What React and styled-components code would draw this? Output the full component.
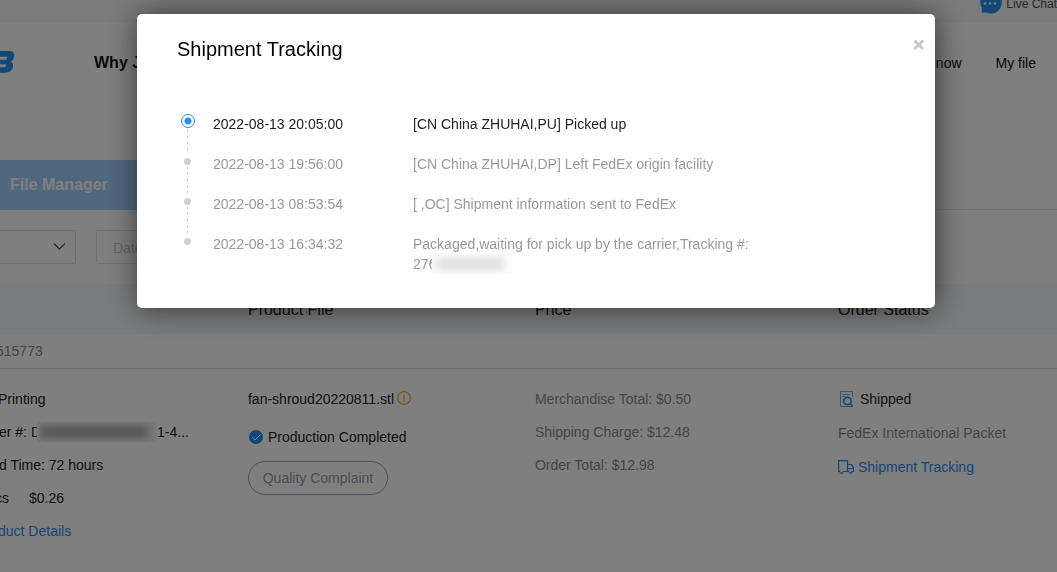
import React from "react";
import styled, { createGlobalStyle } from "styled-components";

const Global = createGlobalStyle`
  * { box-sizing: border-box; }
  html, body { margin: 0; overflow: hidden; }
  body { font: 14px/20px "Liberation Sans", Arial, sans-serif; color: #222; background: #fff; }
  button, input, select { font: inherit; }
  a { color: #2a8cf0; text-decoration: none; }
  h1, h2, p, ul, ol, dl { margin: 0; padding: 0; font-weight: normal; }
`;

const Page = styled.div`
  min-height: 100vh;
  overflow: hidden;
`;

const TopBar = styled.div`
  display: flex;
  justify-content: flex-end;
  height: 23px;
  background: #f7f7f7;
`;

const ChatLink = styled.a`
  display: flex;
  gap: 4px;
  height: 23px;
  color: #555;
  font-size: 12px;
  line-height: 8px;
  white-space: nowrap;
`;

const Header = styled.header`
  display: flex;
  align-items: center;
  height: 80px;
  padding-right: 21px;
`;

const Logo = styled.svg`
  display: block;
  width: 16px;
  height: 24px;
  margin-right: 78px;
`;

const Nav = styled.nav`
  display: flex;
  flex: 1;
  gap: 34px;
`;

const NavLink = styled.a`
  color: #111;
  font-size: ${(p) => (p.$strong ? 16 : 14)}px;
  font-weight: ${(p) => (p.$strong ? "bold" : "normal")};
  margin-right: ${(p) => (p.$push ? "auto" : "0")};
  white-space: nowrap;
`;

const TabBar = styled.div`
  display: flex;
  margin-top: 57px;
  margin-bottom: -1px;
  border-bottom: 1px solid #e6e6e6;
`;

const Tab = styled.button`
  width: 190px;
  height: 50px;
  padding: 0 0 0 10px;
  margin-bottom: -1px;
  border: 0;
  background: #a3cffc;
  color: #fff;
  font-size: 16px;
  font-weight: bold;
  text-align: left;
`;

const Filters = styled.form`
  display: flex;
  gap: 20px;
  padding: 21px 0 20px;
`;

const SelectBox = styled.label`
  position: relative;
  width: 76px;
  height: 34px;
`;

const Select = styled.select`
  width: 100%;
  height: 100%;
  appearance: none;
  border: 1px solid #e2e2ee;
  border-left: 0;
  border-radius: 0 2px 2px 0;
  background: #fff;
`;

const Chevron = styled.svg`
  position: absolute;
  top: 12px;
  right: 10px;
  width: 13px;
  height: 9px;
  pointer-events: none;
`;

const DateInput = styled.input`
  width: 220px;
  height: 34px;
  padding: 2px 16px 0;
  border: 1px solid #e2e2ee;
  border-radius: 2px;
  background: #fff;
  &::placeholder { color: #c8c8c8; opacity: 1; }
`;

const Orders = styled.table`
  width: 100%;
  table-layout: fixed;
  border-collapse: collapse;
  text-align: left;
`;

const HeadCell = styled.th`
  height: 50px;
  padding: 2px 0 0;
  background: #f5f7fa;
  font-size: 16px;
  font-weight: normal;
`;

const OrderNumber = styled.td`
  height: 34px;
  padding: 0;
  border-bottom: 1px solid #dcdce8;
  color: #888;
`;

const Cell = styled.td`
  padding: 20px 0;
  vertical-align: top;
  white-space: nowrap;
`;

const Stack = styled.div`
  display: flex;
  flex-direction: column;
  align-items: flex-start;
  gap: ${(p) => p.$gap || 13}px;
  color: ${(p) => (p.$muted ? "#888" : "inherit")};
`;

const Line = styled.div`
  display: flex;
  align-items: center;
  gap: ${(p) => p.$gap || 0}px;
  color: ${(p) => (p.$muted ? "#888" : "inherit")};
`;

const Clipped = styled(Line)`
  margin-left: ${(p) => -p.$cut}px;
`;

const TrackLink = styled.a`
  display: flex;
  align-items: center;
  gap: 4px;
`;

const Icon = styled.svg`
  display: block;
  flex: none;
`;

const Complaint = styled.button`
  width: 140px;
  height: 34px;
  padding: 0;
  border: 1px solid #a0a0b4;
  border-radius: 17px;
  background: transparent;
  color: #9a9aa6;
`;

const Redacted = styled.span`
  position: relative;
  width: ${(p) => p.$width}px;
  height: 20px;
  margin-left: -4px;
  overflow: hidden;
  background: ${(p) => p.$surface};
  &::before {
    content: "";
    display: block;
    height: 10px;
    margin: 5px 8px 5px 4px;
    background: ${(p) => p.$tone};
    filter: blur(5px);
  }
`;

const Backdrop = styled.div`
  position: fixed;
  inset: 0;
  padding: 14px 122px 0 137px;
  background: rgba(0, 0, 0, 0.5);
`;

const Dialog = styled.section`
  position: relative;
  padding: 23px 40px 34px;
  border-radius: 5px;
  background: #fff;
  box-shadow: 1px 1px 30px rgba(0, 0, 0, 0.6);
`;

const Title = styled.h2`
  color: #000;
  font-size: 20px;
  line-height: 24px;
`;

const Close = styled.button`
  position: absolute;
  top: 24px;
  right: 10px;
  width: 13px;
  height: 13px;
  padding: 0;
  border: 0;
  background: none;
`;

const Timeline = styled.ol`
  padding-top: 53px;
  list-style: none;
`;

const Event = styled.li`
  display: flex;
  min-height: ${(p) => (p.$last ? 20 : 40)}px;
  color: ${(p) => (p.$active ? "#222" : "#999")};
`;

const Marker = styled.span`
  display: flex;
  flex: none;
  flex-direction: column;
  align-items: center;
  width: 21px;
  margin-right: 15px;
`;

const Dot = styled.span`
  flex: none;
  width: 7px;
  height: 7px;
  margin-top: 4px;
  border-radius: 50%;
  background: #d0d0d6;
`;

const ActiveDot = styled.span`
  flex: none;
  width: 14px;
  height: 14px;
  border: 1px solid #2a8cf0;
  border-radius: 50%;
  background: radial-gradient(circle, #2a8cf0 3px, transparent 4px);
`;

const Connector = styled.span`
  flex: 1;
  width: 1px;
  margin-top: 2px;
  background: repeating-linear-gradient(#c8c8cc 0 2px, transparent 2px 6px);
`;

const Time = styled.time`
  flex: none;
  width: 200px;
`;

const Detail = styled.div`
  width: 344px;
`;

const events = [
  { time: "2022-08-13 20:05:00", text: "[CN China ZHUHAI,PU] Picked up" },
  { time: "2022-08-13 19:56:00", text: "[CN China ZHUHAI,DP] Left FedEx origin facility" },
  { time: "2022-08-13 08:53:54", text: "[ ,OC] Shipment information sent to FedEx" },
  {
    time: "2022-08-13 16:34:32",
    text: "Packaged,waiting for pick up by the carrier,Tracking #:",
    number: "276",
  },
];

function ChatIcon() {
  return (
    <Icon width="22" height="14" viewBox="0 0 22 14" aria-hidden="true">
      <path d="M.3 0C.1 3 .5 5.500 1.800 7.500V12.500H6.500C8 13.300 9.500 13.600 11 13.600C17 13.600 21.500 9 21.700 3V0Z" fill="#2a8cf0" />
      <g fill="#fff">
        <circle cx="5" cy="3.5" r="1.3" />
        <circle cx="10" cy="3.5" r="1.3" />
        <circle cx="15" cy="3.5" r="1.3" />
      </g>
    </Icon>
  );
}

function OrdersPage() {
  return (
    <Page>
      <TopBar>
        <ChatLink href="#chat">
          <ChatIcon />
          Live Chat
        </ChatLink>
      </TopBar>
      <Header>
        <Logo viewBox="0 0 16 24" aria-label="JLCPCB" role="img">
          <path
            fillRule="evenodd"
            fill="#2a8cf0"
            d="M-6 0H9C12.500 0 14.600 1.500 14.300 4.500C14 8 12.500 10 10.500 10.700C12.500 11.500 13.500 13 13 16C12.300 19.500 9.500 21.700 5.500 21.700H-10ZM-3 5.800L-4 8.800H4.500C6.200 8.800 7 8.300 7.100 7.200C7.200 6.200 6.500 5.800 5.500 5.800ZM-4 13.200L-5 16.200H3.500C5 16.200 5.900 15.800 6 14.700C6.100 13.700 5.500 13.200 4.500 13.200Z"
          />
        </Logo>
        <Nav>
          <NavLink $strong $push href="#why">Why JLCPCB?</NavLink>
          <NavLink href="#order">Order now</NavLink>
          <NavLink href="#files">My file</NavLink>
        </Nav>
      </Header>
      <TabBar>
        <Tab type="button">File Manager</Tab>
      </TabBar>
      <Filters>
        <SelectBox>
          <Select aria-label="Order status" />
          <Chevron viewBox="0 0 13 9" fill="none" stroke="#555" strokeWidth="1.3" aria-hidden="true">
            <path d="M1 1.500L6.500 7L12 1.500" />
          </Chevron>
        </SelectBox>
        <DateInput aria-label="Date" placeholder="Date" />
      </Filters>
      <Orders>
        <colgroup>
          <col style={{ width: "23.46%" }} />
          <col style={{ width: "27.15%" }} />
          <col style={{ width: "28.67%" }} />
          <col />
        </colgroup>
        <thead>
          <tr>
            <HeadCell aria-label="Product" />
            <HeadCell>Product File</HeadCell>
            <HeadCell>Price</HeadCell>
            <HeadCell>Order Status</HeadCell>
          </tr>
        </thead>
        <tbody>
          <tr>
            <OrderNumber colSpan={4}>
              <Clipped $cut={4}>515773</Clipped>
            </OrderNumber>
          </tr>
          <tr>
            <Cell>
              <Stack>
                <Clipped $cut={2}>Printing</Clipped>
                <Clipped $cut={1}>
                  er #: D
                  <Redacted $width={120} $surface="#f6f6f6" $tone="#989898" />
                  1-4...
                </Clipped>
                <Clipped $cut={1}>d Time: 72 hours</Clipped>
                <Clipped $cut={5} $gap={20}>
                  <span>cs</span>
                  <span>$0.26</span>
                </Clipped>
                <Clipped $cut={2}>
                  <a href="#details">duct Details</a>
                </Clipped>
              </Stack>
            </Cell>
            <Cell>
              <Stack $gap={18}>
                <Line $gap={3}>
                  fan-shroud20220811.stl
                  <Icon width="14" height="16" viewBox="0 0 14 16" fill="none" stroke="#f5a623" aria-hidden="true">
                    <circle cx="7" cy="7" r="6.400" strokeWidth="1.200" />
                    <path d="M7 3.500V8.500M7 9.500V10.700" strokeWidth="1.200" />
                  </Icon>
                </Line>
                <Stack $gap={14}>
                  <Line $gap={4}>
                    <Icon width="16" height="14" viewBox="0 0 16 14" fill="none" aria-hidden="true">
                      <circle cx="8" cy="7" r="7" fill="#2a8cf0" />
                      <path d="M4 7L7 10L12.500 4.500" stroke="#fff" />
                    </Icon>
                    Production Completed
                  </Line>
                  <Complaint type="button">Quality Complaint</Complaint>
                </Stack>
              </Stack>
            </Cell>
            <Cell>
              <Stack $muted>
                <p>Merchandise Total: $0.50</p>
                <p>Shipping Charge: $12.48</p>
                <p>Order Total: $12.98</p>
              </Stack>
            </Cell>
            <Cell>
              <Stack $gap={14}>
                <Line $gap={6}>
                  <Icon width="16" height="16" viewBox="0 0 16 16" fill="none" stroke="#3d9be8" aria-hidden="true">
                    <path d="M14.500 6V.500H2.500V15.500H14.500M4.500 3.500H11.500M4.500 5.500H7.500" opacity=".8" />
                    <circle cx="9.500" cy="10" r="3.700" strokeWidth="1.800" />
                    <path d="M12 12.500L14.800 15.300" strokeWidth="1.800" />
                  </Icon>
                  Shipped
                </Line>
                <Line $muted>FedEx International Packet</Line>
                <TrackLink href="#tracking">
                  <Icon width="16" height="14" viewBox="0 0 16 14" fill="none" stroke="#2a8cf0" strokeWidth="1.200" aria-hidden="true">
                    <path d="M2 11.500H.600V.600H9.500V11.500H5M9.500 4.500H13.500L15.400 7.500V11.500H14M11 11.500H9.500M9.500 8.500H15" />
                    <path d="M2 11.500C2 13.900 5 13.900 5 11.500M11 11.500C11 13.900 14 13.900 14 11.500" />
                  </Icon>
                  Shipment Tracking
                </TrackLink>
              </Stack>
            </Cell>
          </tr>
        </tbody>
      </Orders>
    </Page>
  );
}

function TrackingDialog() {
  return (
    <Backdrop>
      <Dialog role="dialog" aria-modal="true" aria-labelledby="tracking-title">
        <Title id="tracking-title">Shipment Tracking</Title>
        <Close type="button" aria-label="Close">
          <Icon width="13" height="13" viewBox="0 0 13 13" stroke="#c8c8c8" strokeWidth="2.800" aria-hidden="true">
            <path d="M2.500 2.500L11 11M11 2.500L2.500 11" />
          </Icon>
        </Close>
        <Timeline>
          {events.map((event, index) => {
            const last = index === events.length - 1;
            return (
              <Event key={event.time} $active={index === 0} $last={last}>
                <Marker>
                  {index === 0 ? <ActiveDot /> : <Dot />}
                  {!last && <Connector />}
                </Marker>
                <Time>{event.time}</Time>
                <Detail>
                  {event.text}
                  {event.number && (
                    <Line>
                      {event.number}
                      <Redacted $width={80} $surface="#fdfdfd" $tone="#d8d8d8" />
                    </Line>
                  )}
                </Detail>
              </Event>
            );
          })}
        </Timeline>
      </Dialog>
    </Backdrop>
  );
}

export default function App() {
  return (
    <>
      <Global />
      <OrdersPage />
      <TrackingDialog />
    </>
  );
}
